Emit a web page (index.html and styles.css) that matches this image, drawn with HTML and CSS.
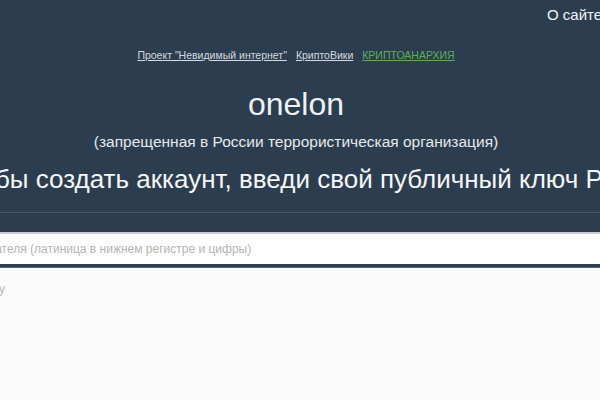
FILE: index.html
```html
<!DOCTYPE html>
<html>

<head>
    <meta charset="utf-8">
    <title>onelon</title>
    <link rel="stylesheet" href="styles.css">
</head>

<body>
    <div class="page">
        <!-- шапка -->
        <div class="hero">
            <div class="topnav">
                <a href="#">О сайте</a>
                <a href="#">Вход</a>
            </div>
            <div class="links">
                <a href="#">Проект "Невидимый интернет"</a>
                <a href="#">КриптоВики</a>
                <a href="#" class="green">КРИПТОАНАРХИЯ</a>
            </div>
            <h1 class="title">onelon</h1>
            <p class="sub">(запрещенная в России террористическая организация)</p>
            <div class="lead"><span>Чтобы создать аккаунт, введи свой публичный ключ PGP</span></div>
        </div>
        <!-- форма -->
        <div class="form">
            <input class="name" type="text" placeholder="Имя пользователя (латиница в нижнем регистре и цифры)">
            <div class="strip"></div>
        </div>
        <textarea class="key" placeholder="Пароль к ключу"></textarea>
    </div>
</body>

</html>
```

FILE: styles.css
```css
* {
    box-sizing: border-box;
}

body {
    margin: 0;
    height: 400px;
    overflow: hidden;
    background-color: #fbfbfb;
    font-family: "Liberation Sans", Arial, sans-serif;
    display: flex;
    justify-content: center;
}

.page {
    flex: none;
    width: 800px;
    margin-right: 8px;
}

.hero {
    background-color: #2c3d4f;
    border-bottom: 1px solid #43566a;
    padding: 7px 0 18px;
}

.topnav {
    display: flex;
    justify-content: flex-end;
    gap: 20px;
    padding-right: 40px;
}

.topnav a {
    color: #f2f4f6;
    font-size: 15px;
    line-height: 16px;
    text-decoration: none;
}

.links {
    display: flex;
    justify-content: center;
    gap: 9px;
    margin-top: 25px;
}

.links a {
    color: #d4d9de;
    font-size: 10.5px;
    line-height: 14px;
}

.links a.green {
    color: #5fae5f;
}

.title {
    margin: 23px 0 0;
    color: #eef1f4;
    font-size: 32px;
    font-weight: normal;
    line-height: 38px;
    text-align: center;
}

.sub {
    margin: 10px 0 0;
    color: #e6e9ec;
    font-size: 15.5px;
    line-height: 18px;
    text-align: center;
}

.lead {
    display: flex;
    justify-content: center;
    margin-top: 13px;
}

.lead span {
    flex: none;
    white-space: nowrap;
    color: #f4f6f8;
    font-size: 26px;
    line-height: 30px;
}

.form {
    background-color: #2c3d4f;
    padding-top: 19px;
}

.name {
    display: block;
    width: 100%;
    height: 32px;
    margin: 0;
    border: 0;
    border-top: 2px solid #c9ced4;
    background-color: #fff;
    padding: 0 12px 0 28px;
    font-family: "Liberation Sans", Arial, sans-serif;
    font-size: 12px;
    outline: none;
}

.name::placeholder {
    color: #b4b4b4;
}

.strip {
    height: 4px;
    border-bottom: 1px solid #53657a;
    margin-bottom: 3px;
}

.key {
    display: block;
    width: 100%;
    height: 140px;
    margin: 0;
    border: 0;
    resize: none;
    background-color: #fbfbfb;
    padding: 11px 12px 11px 22px;
    font-family: "Liberation Sans", Arial, sans-serif;
    font-size: 12px;
    outline: none;
}

.key::placeholder {
    color: #b8b8b8;
}
```
